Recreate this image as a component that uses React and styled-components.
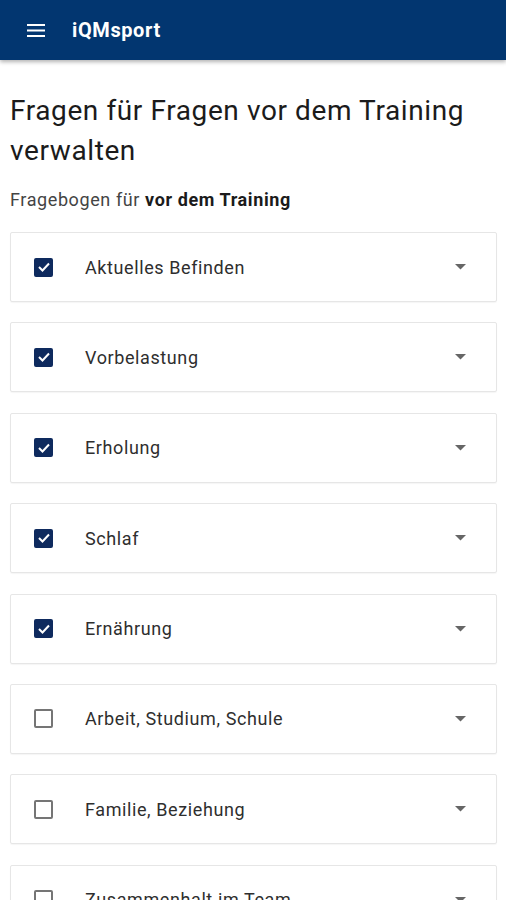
import styled, { createGlobalStyle } from "styled-components";

const GlobalStyle = createGlobalStyle`
  body {
    margin: 0;
    background: #fff;
    font-family: Roboto, "Liberation Sans", sans-serif;
  }
`;

const Header = styled.header`
  height: 60px;
  background: #023670;
  display: flex;
  align-items: center;
  padding-left: 27px;
  box-shadow: 0 2px 4px rgba(0, 0, 0, 0.3);
`;

const Brand = styled.span`
  margin-left: 27px;
  color: #fff;
  font-size: 20px;
  font-weight: 700;
  letter-spacing: 0.6px;
`;

const Content = styled.main`
  padding: 0 9px 0 10px;
`;

const Title = styled.h1`
  margin: 31px 0 0;
  font-size: 28px;
  line-height: 40px;
  font-weight: 400;
  letter-spacing: 0.6px;
  color: #1b1b1b;
`;

const Subtitle = styled.p`
  margin: 17px 0 20px;
  font-size: 18px;
  line-height: 24px;
  letter-spacing: 0.6px;
  color: #444;
  b {
    color: #1b1b1b;
    font-weight: 700;
  }
`;

const List = styled.div`
  display: flex;
  flex-direction: column;
  gap: 20.4px;
`;

const Card = styled.div`
  height: 70px;
  box-sizing: border-box;
  border: 1px solid #e6e6e6;
  border-radius: 2px;
  box-shadow: 0 1px 1px rgba(0, 0, 0, 0.04);
  display: flex;
  align-items: center;
  padding: 0 30px 0 23px;
`;

const Box = styled.span`
  width: 19px;
  height: 19px;
  box-sizing: border-box;
  border-radius: 2px;
  display: flex;
  align-items: center;
  justify-content: center;
  background: ${(p) => (p.$checked ? "#0e2a5e" : "#fff")};
  border: 2px solid ${(p) => (p.$checked ? "#0e2a5e" : "#757575")};
`;

const Label = styled.span`
  flex: 1;
  margin-left: 32px;
  font-size: 18px;
  letter-spacing: 0.6px;
  color: #2e2e2e;
`;

const items = [
  ["Aktuelles Befinden", true],
  ["Vorbelastung", true],
  ["Erholung", true],
  ["Schlaf", true],
  ["Ernährung", true],
  ["Arbeit, Studium, Schule", false],
  ["Familie, Beziehung", false],
  ["Zusammenhalt im Team", false],
];

function Menu() {
  return (
    <svg width="18" height="13" viewBox="0 0 18 13">
      <rect y="0" width="18" height="2" fill="#fff" />
      <rect y="5.5" width="18" height="2" fill="#fff" />
      <rect y="11" width="18" height="2" fill="#fff" />
    </svg>
  );
}

function Caret() {
  return (
    <svg width="11" height="6" viewBox="0 0 11 6">
      <path d="M0 0h11L5.5 5.5z" fill="#666" />
    </svg>
  );
}

export default function App() {
  return (
    <>
      <GlobalStyle />
      <Header>
        <Menu />
        <Brand>iQMsport</Brand>
      </Header>
      <Content>
        <Title>Fragen für Fragen vor dem Training verwalten</Title>
        <Subtitle>
          Fragebogen für <b>vor dem Training</b>
        </Subtitle>
        <List>
          {items.map(([name, checked]) => (
            <Card key={name}>
              <Box $checked={checked}>
                {checked && (
                  <svg width="12" height="10" viewBox="0 0 12 10">
                    <path d="M1 5l3.5 3.5L11 1.5" stroke="#fff" strokeWidth="2" fill="none" />
                  </svg>
                )}
              </Box>
              <Label>{name}</Label>
              <Caret />
            </Card>
          ))}
        </List>
      </Content>
    </>
  );
}
